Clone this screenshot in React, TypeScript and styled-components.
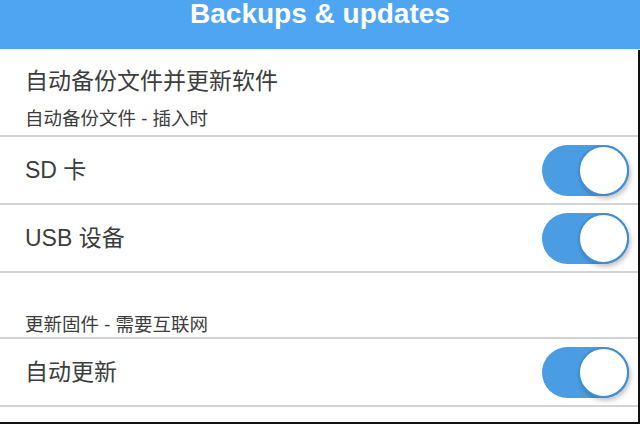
import React from "react";
import styled, { createGlobalStyle } from "styled-components";

const GlobalStyle = createGlobalStyle`
  body {
    margin: 0;
    background: #ffffff;
    font-family: "Liberation Sans", "Noto Sans CJK SC", sans-serif;
  }
`;

const Page = styled.div`
  width: 640px;
  height: 424px;
  overflow: hidden;
  background: #ffffff;
`;

const Header = styled.header`
  height: 49px;
  background: #4ea6f2;
  border-bottom: 1px solid #e4f0fb;
  display: flex;
  justify-content: center;
  align-items: flex-start;
`;

const Title = styled.h1`
  margin: 0;
  font-size: 28px;
  line-height: 28px;
  font-weight: bold;
  color: #ffffff;
`;

const Body = styled.div`
  height: 374px;
  box-sizing: border-box;
  border-right: 2px solid #111111;
  border-bottom: 2px solid #111111;
`;

const Intro = styled.div`
  height: 87px;
  box-sizing: border-box;
  padding: 16px 0 0 25px;
  border-bottom: 2px solid #d4d4d4;
  display: flex;
  flex-direction: column;
  gap: 11px;
`;

const Label = styled.div`
  font-size: 23px;
  line-height: 30px;
  color: #3d3d3d;
`;

const Caption = styled.div`
  font-size: 18.5px;
  line-height: 24px;
  color: #3d3d3d;
`;

const SectionHead = styled.div`
  height: 66px;
  box-sizing: border-box;
  padding: 0 0 0 25px;
  border-bottom: 2px solid #d4d4d4;
  display: flex;
  align-items: flex-end;
`;

const Row = styled.div`
  height: 68px;
  box-sizing: border-box;
  padding: 0 9px 0 25px;
  border-bottom: 2px solid #d4d4d4;
  display: flex;
  align-items: center;
  justify-content: space-between;
`;

const Track = styled.div<{ $on: boolean }>`
  position: relative;
  width: 87px;
  height: 51px;
  border-radius: 26px;
  background: ${(p) => (p.$on ? "#4a9de2" : "#e2e2e2")};
`;

const Knob = styled.div<{ $on: boolean }>`
  position: absolute;
  top: 0;
  ${(p) => (p.$on ? "right: 0;" : "left: 0;")}
  width: 51px;
  height: 51px;
  box-sizing: border-box;
  border-radius: 50%;
  background: #ffffff;
  border: 2px solid #3f8ed4;
  box-shadow: 2px 3px 4px rgba(0, 0, 0, 0.22);
`;

function Toggle({ on }: { on: boolean }) {
  return (
    <Track $on={on}>
      <Knob $on={on} />
    </Track>
  );
}

const rows = ["SD 卡", "USB 设备"];

export default function App() {
  return (
    <Page>
      <GlobalStyle />
      <Header>
        <Title>Backups &amp; updates</Title>
      </Header>
      <Body>
        <Intro>
          <Label>自动备份文件并更新软件</Label>
          <Caption>自动备份文件 - 插入时</Caption>
        </Intro>
        {rows.map((r) => (
          <Row key={r}>
            <Label>{r}</Label>
            <Toggle on />
          </Row>
        ))}
        <SectionHead>
          <Caption>更新固件 - 需要互联网</Caption>
        </SectionHead>
        <Row>
          <Label>自动更新</Label>
          <Toggle on />
        </Row>
      </Body>
    </Page>
  );
}
